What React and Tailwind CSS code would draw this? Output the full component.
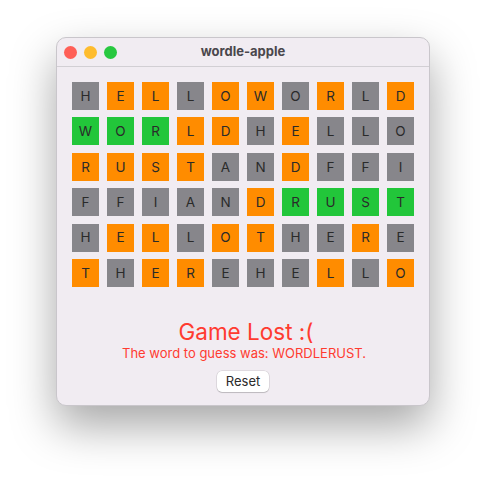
import React from "react";

const ROWS = [
  ["HELLOWORLD", "googoogogo"],
  ["WORLDHELLO", "yyyoogoggg"],
  ["RUSTANDFFI", "ooooggoggg"],
  ["FFIANDRUST", "gggggoyyyy"],
  ["HELLOTHERE", "googooggog"],
  ["THEREHELLO", "ogoogggogo"],
];

const TILE = {
  g: "bg-[#87868b]",
  o: "bg-[#ff8c00]",
  y: "bg-[#22c63a]",
};

function Tile({ letter, kind }) {
  return (
    <div
      className={`flex h-[28px] w-[27px] items-center justify-center text-[13.5px] text-[#2a2a2a] ${TILE[kind]}`}
    >
      {letter}
    </div>
  );
}

export default function App() {
  return (
    <div
      className="h-[481px] w-[486px] bg-white pt-[37px] pl-[56px]"
      style={{ fontFamily: "Inter, 'Liberation Sans', sans-serif" }}
    >
      <div className="flex h-[369px] w-[374px] flex-col overflow-hidden rounded-[10px] border border-[#c9c6cb] bg-[#f1ecf2] shadow-[0_20px_45px_rgba(0,0,0,0.35)]">
        {/* title bar */}
        <div className="relative flex h-[29px] shrink-0 items-center border-b border-[#d2cfd4] px-[7px]">
          <div className="flex gap-[7px]">
            <span className="h-[13px] w-[13px] rounded-full bg-[#ff5f57]" />
            <span className="h-[13px] w-[13px] rounded-full bg-[#febc2e]" />
            <span className="h-[13px] w-[13px] rounded-full bg-[#28c840]" />
          </div>
          <div className="absolute inset-0 flex items-center justify-center text-[13px] font-bold text-[#4a474c]">
            wordle-apple
          </div>
        </div>

        {/* board */}
        <div className="flex flex-col gap-y-[7.4px] px-[15px] pt-[15px]">
          {ROWS.map(([word, kinds], r) => (
            <div key={r} className="flex gap-[8px]">
              {word.split("").map((ch, i) => (
                <Tile key={i} letter={ch} kind={kinds[i]} />
              ))}
            </div>
          ))}
        </div>

        {/* result */}
        <div className="mt-[32px] flex flex-col items-center text-[#ff3b30]">
          <div className="pl-[6px] text-[22.5px] leading-[26px]">Game Lost :(</div>
          <div className="pl-[2px] text-[13px] leading-[16px]">
            The word to guess was: WORDLERUST.
          </div>
          <button className="mt-[10px] h-[21px] w-[52px] rounded-[5px] bg-white text-[13px] text-[#2a2a2a] shadow-[0_0_0_0.5px_rgba(0,0,0,0.15),0_1px_1px_rgba(0,0,0,0.15)]">
            Reset
          </button>
        </div>
      </div>
    </div>
  );
}
